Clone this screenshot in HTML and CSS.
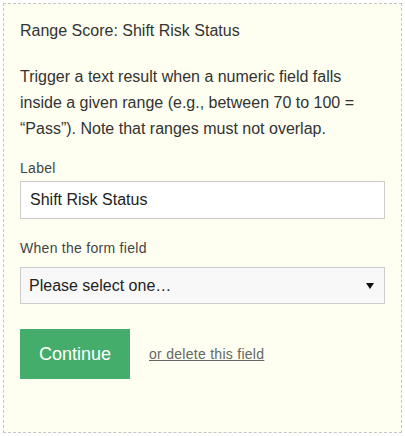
FILE: index.html
```html
<!DOCTYPE html>
<html>
<head>
<meta charset="utf-8">
<link rel="stylesheet" href="styles.css">
</head>
<body>
<div class="card">
  <h2 class="title">Range Score: Shift Risk Status</h2>
  <p class="desc">Trigger a text result when a numeric field falls inside a given range (e.g., between 70 to 100 = “Pass”). Note that ranges must not overlap.</p>
  <label class="field-label first" for="lbl">Label</label>
  <input id="lbl" class="text-input" type="text" value="Shift Risk Status">
  <label class="field-label second" for="fld">When the form field</label>
  <div class="select-wrap">
    <select id="fld" class="select">
      <option>Please select one…</option>
    </select>
  </div>
  <div class="actions">
    <button class="btn" type="button">Continue</button>
    <a class="delete-link" href="#">or delete this field</a>
  </div>
</div>
</body>
</html>
```

FILE: styles.css
```css
* { box-sizing: border-box; }
html, body { margin: 0; padding: 0; background: #ffffff; }
body { font-family: "Liberation Sans", Arial, Helvetica, sans-serif; color: #333; }

.card {
  margin: 3px;
  border: 1px dashed #c6c6c6;
  background: #fefff0;
  padding: 17px 16px 53px 16px;
  display: flex;
  flex-direction: column;
}

.title {
  margin: 0;
  font-size: 16px;
  font-weight: normal;
  line-height: 20px;
  color: #333;
}

.desc {
  margin: 23px 0 0 0;
  font-size: 16px;
  line-height: 26px;
  color: #333;
}

.field-label {
  display: block;
  font-size: 14px;
  line-height: 20px;
  letter-spacing: 0.28px;
  color: #444;
}
.field-label.first { margin-top: 16px; }
.field-label.second { margin-top: 19px; }

.text-input {
  margin-top: 3px;
  width: 100%;
  height: 38px;
  border: 1px solid #cccccc;
  background: #ffffff;
  padding: 0 9px;
  font-family: inherit;
  font-size: 16px;
  color: #222;
  outline: none;
}

.select-wrap {
  position: relative;
  margin-top: 9px;
}
.select-wrap::after {
  content: "";
  position: absolute;
  right: 11px;
  top: 16px;
  width: 0;
  height: 0;
  border-left: 4px solid transparent;
  border-right: 4px solid transparent;
  border-top: 6px solid #111;
  pointer-events: none;
}
.select {
  -webkit-appearance: none;
  appearance: none;
  width: 100%;
  height: 37px;
  border: 1px solid #cccccc;
  border-radius: 0;
  background: #f8f8f8;
  padding: 0 30px 0 8px;
  font-family: inherit;
  font-size: 16px;
  color: #222;
  outline: none;
}

.actions {
  margin-top: 25px;
  display: flex;
  align-items: center;
  gap: 19px;
}
.btn {
  width: 110px;
  height: 50px;
  border: none;
  border-radius: 0;
  background: #44ad6b;
  color: #ffffff;
  font-family: inherit;
  font-size: 18px;
  padding: 0;
}
.delete-link {
  font-size: 14px;
  line-height: 20px;
  letter-spacing: 0.28px;
  color: #666;
  text-decoration: underline;
}
```
